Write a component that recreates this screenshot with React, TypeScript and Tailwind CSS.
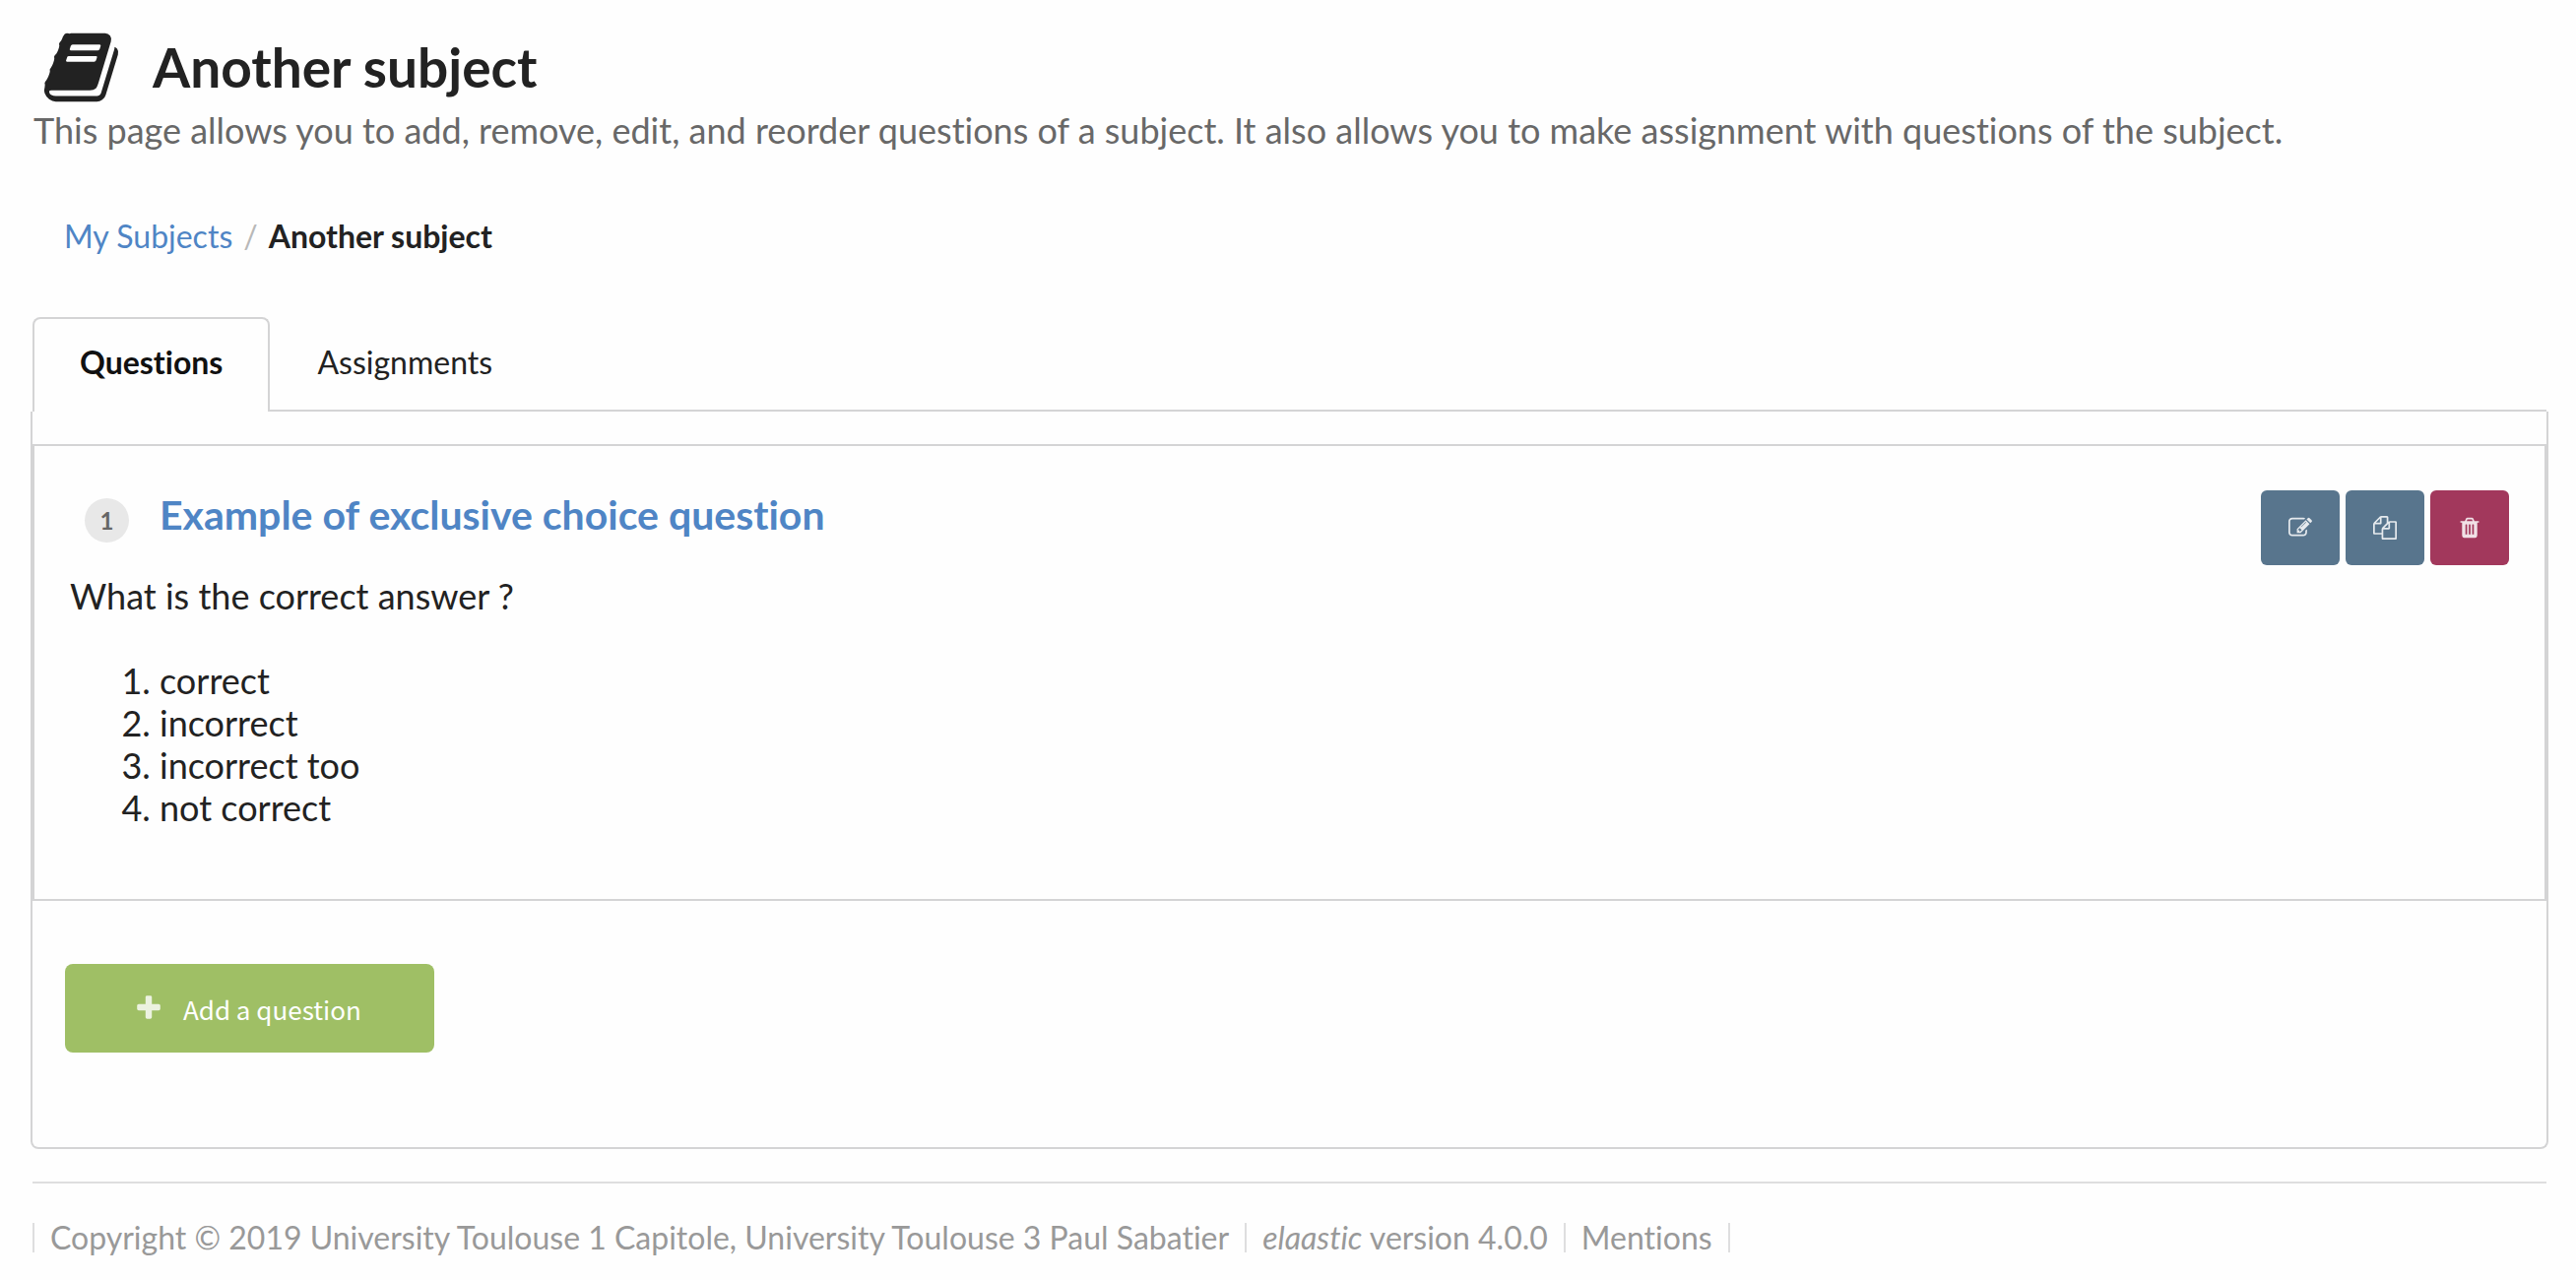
import React from "react";

type GlyphProps = { d: string; className: string };

function Glyph({ d, className }: GlyphProps) {
  return (
    <svg viewBox="0 0 1792 1792" fill="currentColor" aria-hidden="true" className={className}>
      <path d={d} />
    </svg>
  );
}

const BOOK =
  "M1703 478q40 57 18 129l-275 906q-19 64-76.5 107.5t-122.5 43.5h-923q-77 0-148.5-53.5t-99.5-131.5q-24-67-2-127 0-4 3-27t4-37q1-8-3-21.5t-3-19.5q2-11 8-21t16.5-23.5 16.5-23.5q23-38 45-91.5t30-91.5q3-10 .5-30t-.5-28q3-11 17-28t17-23q21-36 42-92t25-90q1-9-2.5-32t.5-28q4-13 22-30.5t22-22.5q19-26 42.5-84.5t27.5-96.5q1-8-3-25.5t-2-26.5q2-8 9-18t18-23 17-21q8-12 16.5-30.5t15-35 16-36 19.5-32 26.5-23.5 36-11.5 47.5 5.5l-1 3q38-9 51-9h761q74 0 114 56t18 130l-274 906q-36 119-71.5 153.5t-128.5 34.5h-869q-27 0-38 15-11 16-1 43 24 70 144 70h923q29 0 56-15.5t35-41.5l300-987q7-22 5-57 38 15 59 43zm-1064 2q-4 13 2 22.5t20 9.5h608q13 0 25.5-9.5t16.5-22.5l21-64q4-13-2-22.5t-20-9.5h-608q-13 0-25.5 9.5t-16.5 22.5zm-83 256q-4 13 2 22.5t20 9.5h608q13 0 25.5-9.5t16.5-22.5l21-64q4-13-2-22.5t-20-9.5h-608q-13 0-25.5 9.5t-16.5 22.5z";
const EDIT =
  "M888 1184l116-116-152-152-116 116v56h96v96h56zm440-720q-16-16-33 1l-350 350q-17 17-1 33t33-1l350-350q17-17 1-33zm80 594v190q0 119-84.5 203.5t-203.5 84.5h-832q-119 0-203.5-84.5t-84.5-203.5v-832q0-119 84.5-203.5t203.5-84.5h832q63 0 117 25 15 7 18 23 3 17-9 29l-49 49q-14 14-32 8-23-6-45-6h-832q-66 0-113 47t-47 113v832q0 66 47 113t113 47h832q66 0 113-47t47-113v-126q0-13 9-22l64-64q15-15 35-7t20 29zm-96-738l288 288-672 672h-288v-288zm444 132l-92 92-288-288 92-92q28-28 68-28t68 28l152 152q28 28 28 68t-28 68z";
const COPY =
  "M1696 384q40 0 68 28t28 68v1216q0 40-28 68t-68 28h-960q-40 0-68-28t-28-68v-288h-544q-40 0-68-28t-28-68v-672q0-40 20-88t48-76l408-408q28-28 76-48t88-20h416q40 0 68 28t28 68v328q68-40 128-40h416zm-544 213l-299 299h299v-299zm-640-384l-299 299h299v-299zm196 647l316-316v-416h-384v416q0 40-28 68t-68 28h-416v640h512v-256q0-40 20-88t48-76zm956 804v-1152h-384v416q0 40-28 68t-68 28h-416v640h896z";
const TRASH =
  "M704 1376v-704q0-14-9-23t-23-9h-64q-14 0-23 9t-9 23v704q0 14 9 23t23 9h64q14 0 23-9t9-23zm256 0v-704q0-14-9-23t-23-9h-64q-14 0-23 9t-9 23v704q0 14 9 23t23 9h64q14 0 23-9t9-23zm256 0v-704q0-14-9-23t-23-9h-64q-14 0-23 9t-9 23v704q0 14 9 23t23 9h64q14 0 23-9t9-23zm-544-992h448l-48-117q-7-9-17-11h-317q-10 2-17 11zm928 32v64q0 14-9 23t-23 9h-96v948q0 83-47 143.5t-113 60.5h-832q-66 0-113-58.5t-47-141.5v-952h-96q-14 0-23-9t-9-23v-64q0-14 9-23t23-9h309l70-167q15-37 54-63t79-26h320q40 0 79 26t54 63l70 167h309q14 0 23 9t9 23z";
const PLUS =
  "M1600 736v192q0 40-28 68t-68 28h-416v416q0 40-28 68t-68 28h-192q-40 0-68-28t-28-68v-416h-416q-40 0-68-28t-28-68v-192q0-40 28-68t68-28h416v-416q0-40 28-68t68-28h192q40 0 68 28t28 68v416h416q40 0 68 28t28 68z";

const ANSWERS = ["correct", "incorrect", "incorrect too", "not correct"];

const ACTIONS = [
  { label: "Edit question", icon: EDIT, tone: "bg-[#58758d]" },
  { label: "Duplicate question", icon: COPY, tone: "bg-[#58758d]" },
  { label: "Delete question", icon: TRASH, tone: "bg-[#a2385c]" },
];

export default function App() {
  return (
    <div className="min-h-screen bg-[#fefefe] pl-[33px] pr-[30px] pt-7 font-['Lato',sans-serif] text-[#222] [font-variant-ligatures:no-common-ligatures]">
      <header className="pl-px">
        <h1 className="flex h-20 items-center gap-8 pl-2 text-[55px] leading-[80px] font-bold">
          <Glyph d={BOOK} className="size-[81px] shrink-0" />
          Another subject
        </h1>
        <p className="text-[36px] leading-[48px] text-[#686868]">
          This page allows you to add, remove, edit, and reorder questions of a subject. It also
          allows you to make assignment with questions of the subject.
        </p>
      </header>

      <nav aria-label="Breadcrumb" className="mt-[61px] pl-8">
        <ol className="flex gap-[11px] text-[32px] leading-[46px]">
          <li>
            <a href="#subjects" className="text-[#4f85c5]">
              My Subjects
            </a>
          </li>
          <li aria-hidden="true" className="text-[#b8b8b8]">
            /
          </li>
          <li aria-current="page" className="font-bold">
            Another subject
          </li>
        </ol>
      </nav>

      <div role="tablist" className="mt-[59px] flex border-b-2 border-[#d4d4d5] text-[32px] leading-8">
        <button
          role="tab"
          aria-selected="true"
          className="-mb-0.5 h-24 rounded-t-lg border-2 border-b-0 border-[#d4d4d5] bg-[#fefefe] px-[46px] pb-1.5 font-bold text-[#111]"
        >
          Questions
        </button>
        <button role="tab" aria-selected="false" className="h-[94px] px-12 pb-0.5">
          Assignments
        </button>
      </div>

      <main className="-mx-0.5 rounded-b-lg border-2 border-t-0 border-[#d4d4d5] pt-[33px] pb-24">
        <article className="border-2 border-[#d4d4d5] px-9 pt-[45px] pb-[71px]">
          <div className="flex items-start justify-between">
            <h2 className="flex items-start pl-[15px] text-[41px] leading-[50px] font-bold">
              <span className="mt-2 mr-[31px] flex size-[45px] items-center justify-center rounded-full bg-[#e8e8e8] text-[24px] text-[#666]">
                1
              </span>
              <a href="#question-1" className="text-[#4f85c5]">
                Example of exclusive choice question
              </a>
            </h2>
            <div className="flex gap-1.5">
              {ACTIONS.map((action) => (
                <button
                  key={action.label}
                  aria-label={action.label}
                  className={`flex h-[76px] w-20 items-center justify-center rounded-md text-white/85 ${action.tone}`}
                >
                  <Glyph d={action.icon} className="size-6" />
                </button>
              ))}
            </div>
          </div>
          <p className="text-[36px] leading-[62px]">What is the correct answer ?</p>
          <ol className="mt-[34px] list-decimal pl-[91px] text-[36px] leading-[43px]">
            {ANSWERS.map((answer) => (
              <li key={answer}>{answer}</li>
            ))}
          </ol>
        </article>

        <button className="mt-16 ml-[33px] flex h-[90px] items-center gap-5 rounded-lg bg-[#9fbf65] pr-[74px] pl-[70px] font-['Noto_Sans_CJK_SC',sans-serif] text-[26px] font-normal text-white">
          <Glyph d={PLUS} className="size-[30px] text-white/80" />
          Add a question
        </button>
      </main>

      <footer className="mt-[33px] border-t-2 border-[#dededf] pt-10 text-[32px] leading-[30px] text-[#999]">
        <ul className="flex">
          <li className="border-l-2 border-[#dededf] px-4">
            Copyright © 2019 University Toulouse 1 Capitole, University Toulouse 3 Paul Sabatier
          </li>
          <li className="border-l-2 border-[#dededf] px-4">
            <em>elaastic</em> version 4.0.0
          </li>
          <li className="border-x-2 border-[#dededf] px-4">
            <a href="#mentions">Mentions</a>
          </li>
        </ul>
      </footer>
    </div>
  );
}
